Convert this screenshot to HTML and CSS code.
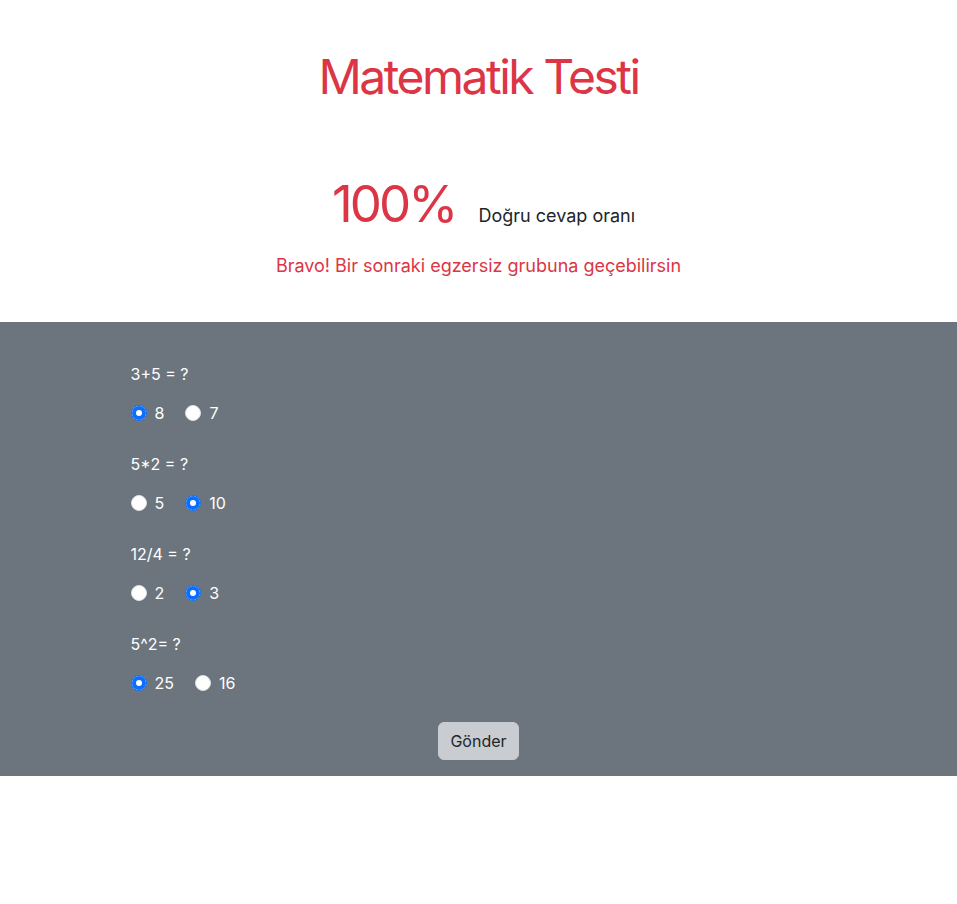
FILE: index.html
```html
<!DOCTYPE html>
<html lang="tr">
<head>
<meta charset="utf-8">
<title>Matematik Testi</title>
<link rel="stylesheet" href="styles.css">
</head>
<body>
<header class="hero">
  <h1 class="title">Matematik Testi</h1>
  <div class="score">
    <span class="score-value">100%</span>
    <span class="score-label">Doğru cevap oranı</span>
  </div>
  <p class="bravo">Bravo! Bir sonraki egzersiz grubuna geçebilirsin</p>
</header>
<section class="quiz">
  <form class="quiz-inner">
    <div class="question">
      <p class="q-label">3+5 = ?</p>
      <div class="options">
        <label class="option"><input type="radio" name="q1" checked><span>8</span></label>
        <label class="option"><input type="radio" name="q1"><span>7</span></label>
      </div>
    </div>
    <div class="question">
      <p class="q-label">5*2 = ?</p>
      <div class="options">
        <label class="option"><input type="radio" name="q2"><span>5</span></label>
        <label class="option"><input type="radio" name="q2" checked><span>10</span></label>
      </div>
    </div>
    <div class="question">
      <p class="q-label">12/4 = ?</p>
      <div class="options">
        <label class="option"><input type="radio" name="q3"><span>2</span></label>
        <label class="option"><input type="radio" name="q3" checked><span>3</span></label>
      </div>
    </div>
    <div class="question">
      <p class="q-label">5^2= ?</p>
      <div class="options">
        <label class="option"><input type="radio" name="q4" checked><span>25</span></label>
        <label class="option"><input type="radio" name="q4"><span>16</span></label>
      </div>
    </div>
    <div class="actions">
      <button type="button" class="btn">Gönder</button>
    </div>
  </form>
</section>
</body>
</html>
```
FILE: styles.css
```css
* { box-sizing: border-box; }
body {
  margin: 0;
  font-family: Inter, "Noto Sans", "Liberation Sans", sans-serif;
  font-size: 16px;
  line-height: 1.5;
  color: #212529;
  background: #fff;
}
.hero {
  text-align: center;
  padding: 48px 0 0;
  height: 322px;
}
.title {
  margin: 0;
  font-size: 48px;
  font-weight: 400;
  line-height: 1.2;
  letter-spacing: -0.052em;
  color: #dc3545;
}
.score {
  margin: 67px 0 0 10px;
  display: flex;
  justify-content: center;
  align-items: baseline;
  gap: 23px;
}
.score-value {
  font-size: 51px;
  font-weight: 400;
  line-height: 1.2;
  letter-spacing: -0.057em;
  color: #dc3545;
}
.score-label {
  font-size: 18px;
  color: #212529;
}
.bravo {
  margin: 18px 0 0;
  font-size: 18px;
  color: #dc3545;
}
.quiz {
  background: #6c757d;
  color: #fff;
  padding: 40px 0 16px;
}
.quiz-inner {
  width: 720px;
  margin: 0 auto;
  padding: 0 12px;
}
.question {
  margin-bottom: 27px;
}
.q-label {
  margin: 0 0 15px;
}
.options {
  display: flex;
  gap: 21px;
}
.option {
  display: flex;
  align-items: center;
  gap: 8px;
}
.option input {
  appearance: none;
  -webkit-appearance: none;
  margin: 0;
  width: 16px;
  height: 16px;
  border-radius: 50%;
  background: #fff;
  border: 1px solid #dee2e6;
}
.option input:checked {
  border-color: #0d6efd;
  box-shadow: inset 0 0 0 4px #0d6efd;
}
.actions {
  display: flex;
  justify-content: center;
}
.btn {
  font-family: inherit;
  font-size: 16px;
  line-height: 1.5;
  padding: 6px 11px;
  border: 1px solid #c9ccd0;
  border-radius: 6px;
  background: #c9ccd0;
  color: #212529;
}
```
